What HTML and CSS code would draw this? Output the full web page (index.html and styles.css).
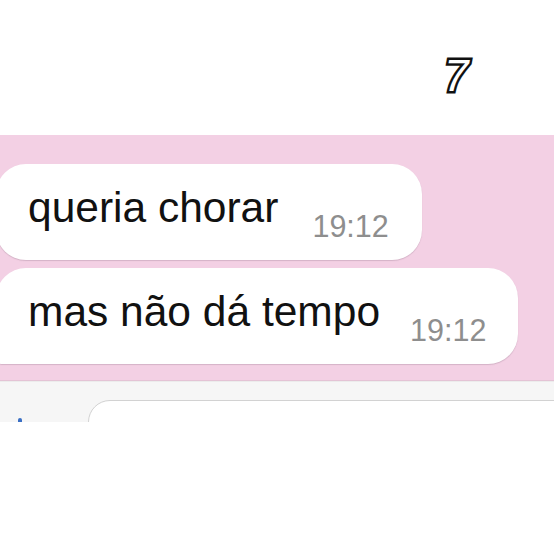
FILE: index.html
```html
<!DOCTYPE html>
<html>
<head>
<meta charset="utf-8">
<link rel="stylesheet" href="styles.css">
</head>
<body>
<div class="page">
  <header class="top">
    <span class="sticker">7</span>
  </header>
  <main class="chat">
    <div class="bubble b1">
      <span class="msg">queria chorar</span>
      <span class="time">19:12</span>
    </div>
    <div class="bubble b2">
      <span class="msg">mas não dá tempo</span>
      <span class="time">19:12</span>
    </div>
  </main>
  <footer class="composer">
    <span class="plus"></span>
    <div class="input"></div>
  </footer>
</div>
</body>
</html>
```

FILE: styles.css
```css
html, body {
  margin: 0;
  padding: 0;
  background: #ffffff;
}
.page {
  width: 554px;
  height: 554px;
  overflow: hidden;
  font-family: "Liberation Sans", Arial, sans-serif;
  background: #ffffff;
}
.top {
  height: 135px;
  box-sizing: border-box;
  padding-top: 54px;
  padding-left: 444px;
}
.sticker {
  display: block;
  font-family: "Liberation Sans", Arial, sans-serif;
  font-size: 44px;
  line-height: 44px;
  font-style: italic;
  color: #ffffff;
  -webkit-text-stroke: 5px #111111;
  paint-order: stroke fill;
}
.chat {
  background: #f3d0e4;
  box-sizing: border-box;
  height: 246px;
  padding-top: 29px;
  display: flex;
  flex-direction: column;
  align-items: flex-start;
  gap: 8px;
  border-bottom: 1px solid #e4c3d5;
}
.bubble {
  background: #ffffff;
  border-radius: 30px;
  display: flex;
  align-items: flex-end;
  margin-left: -4px;
  padding: 20px 33px 19px 32px;
  box-shadow: 0 1px 1px rgba(120, 90, 110, 0.25);
}
.b1 { gap: 34px; }
.b2 { gap: 30px; padding-right: 32px; border-bottom-left-radius: 6px; }
.msg {
  font-size: 42.5px;
  line-height: 48px;
  color: #111111;
  margin-bottom: 9px;
}
.time {
  font-size: 30.5px;
  line-height: 30px;
  color: #8e8e8e;
}
.composer {
  height: 40px;
  background: #f6f6f6;
  border-top: 1px solid #ececec;
  display: flex;
  overflow: hidden;
  padding-left: 18px;
}
.plus {
  width: 4px;
  height: 12px;
  margin-top: 36px;
  background: #3a6fc4;
  border-radius: 2px;
}
.input {
  flex: 1;
  margin-left: 66px;
  margin-top: 18px;
  margin-right: -40px;
  height: 60px;
  background: #ffffff;
  border: 1px solid #d2d2d2;
  border-radius: 22px;
}
```
